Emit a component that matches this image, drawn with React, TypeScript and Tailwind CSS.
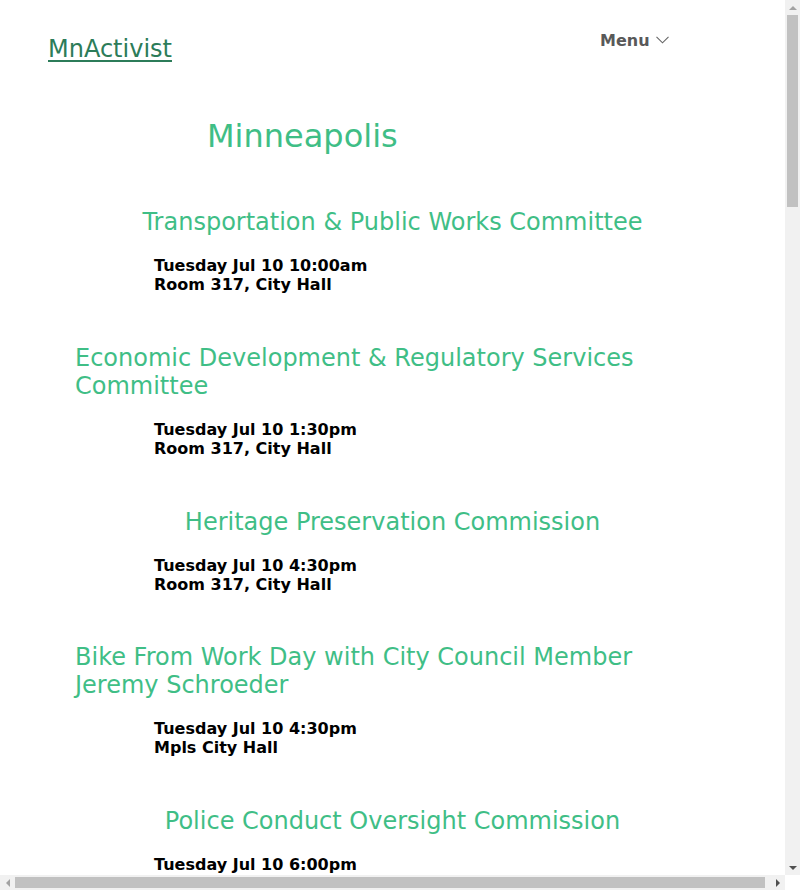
const EVENTS = [
  {
    title: 'Transportation & Public Works Committee',
    when: 'Tuesday Jul 10 10:00am',
    where: 'Room 317, City Hall',
  },
  {
    title: 'Economic Development & Regulatory Services Committee',
    when: 'Tuesday Jul 10 1:30pm',
    where: 'Room 317, City Hall',
  },
  {
    title: 'Heritage Preservation Commission',
    when: 'Tuesday Jul 10 4:30pm',
    where: 'Room 317, City Hall',
  },
  {
    title: 'Bike From Work Day with City Council Member Jeremy Schroeder',
    when: 'Tuesday Jul 10 4:30pm',
    where: 'Mpls City Hall',
  },
  {
    title: 'Police Conduct Oversight Commission',
    when: 'Tuesday Jul 10 6:00pm',
    where: 'Room 241, City Hall',
  },
];

function Arrow({ dir, color }: { dir: 'up' | 'down' | 'left' | 'right'; color: string }) {
  const points = {
    up: '0,4 4,0 8,4',
    down: '0,0 8,0 4,4',
    left: '4,0 4,8 0,4',
    right: '0,0 4,4 0,8',
  }[dir];
  const vertical = dir === 'up' || dir === 'down';
  return (
    <svg width={vertical ? 8 : 4} height={vertical ? 4 : 8} viewBox={vertical ? '0 0 8 4' : '0 0 4 8'}>
      <polygon points={points} fill={color} />
    </svg>
  );
}

export default function App() {
  return (
    <div className="flex h-[890px] w-[800px] flex-col overflow-hidden bg-white font-['DejaVu_Sans',sans-serif]">
      <div className="flex h-[875px]">
        <div className="h-[875px] w-[785px] overflow-hidden">
          <header className="flex w-[790px] items-start pl-12 pt-[31px]">
            <a
              href="#"
              className="mt-[4px] text-[24px] leading-[28px] text-[#2c7c59] underline underline-offset-[3px]"
            >
              MnActivist
            </a>
            <button className="ml-[428px] flex items-center gap-[6px] text-[16px] font-bold leading-[19px] text-[#595959]">
              Menu
              <svg width="13" height="8" viewBox="0 0 13 8" fill="none" className="mt-[-2px]">
                <path d="M0.5 0.8 L6.5 6.8 L12.5 0.8" stroke="#666666" strokeWidth="1.1" />
              </svg>
            </button>
          </header>

          <main>
            <h1 className="mt-[55px] pl-[207px] text-[32px] font-normal leading-[37px] text-[#3fbe86]">
              Minneapolis
            </h1>

            <div className="mx-auto mt-[53px] w-[635px]">
              {EVENTS.map((event) => (
                <section key={event.title} className="mb-[49.75px]">
                  <h2 className="mx-auto mb-5 w-fit text-[24px] font-normal leading-[28px] text-[#3fbe86]">
                    {event.title}
                  </h2>
                  <div className="pl-[79px] text-[16px] font-bold leading-[19px] text-black">
                    <div>{event.when}</div>
                    <div>{event.where}</div>
                  </div>
                </section>
              ))}
            </div>
          </main>
        </div>

        {/* vertical scrollbar */}
        <div className="flex w-[15px] flex-col bg-[#f1f1f1]">
          <div className="flex h-[15px] items-center justify-center">
            <Arrow dir="up" color="#a3a3a3" />
          </div>
          <div className="flex-1 px-[2px]">
            <div className="h-[192px] bg-[#c1c1c1]" />
          </div>
          <div className="flex h-[15px] items-center justify-center">
            <Arrow dir="down" color="#505050" />
          </div>
        </div>
      </div>

      {/* horizontal scrollbar */}
      <div className="flex h-[15px]">
        <div className="flex w-[785px] bg-[#f1f1f1]">
          <div className="flex w-[15px] items-center justify-center">
            <Arrow dir="left" color="#a3a3a3" />
          </div>
          <div className="flex-1 py-[2px]">
            <div className="h-full w-[750px] bg-[#c1c1c1]" />
          </div>
          <div className="flex w-[15px] items-center justify-center">
            <Arrow dir="right" color="#505050" />
          </div>
        </div>
        <div className="w-[15px] bg-white" />
      </div>
    </div>
  );
}
